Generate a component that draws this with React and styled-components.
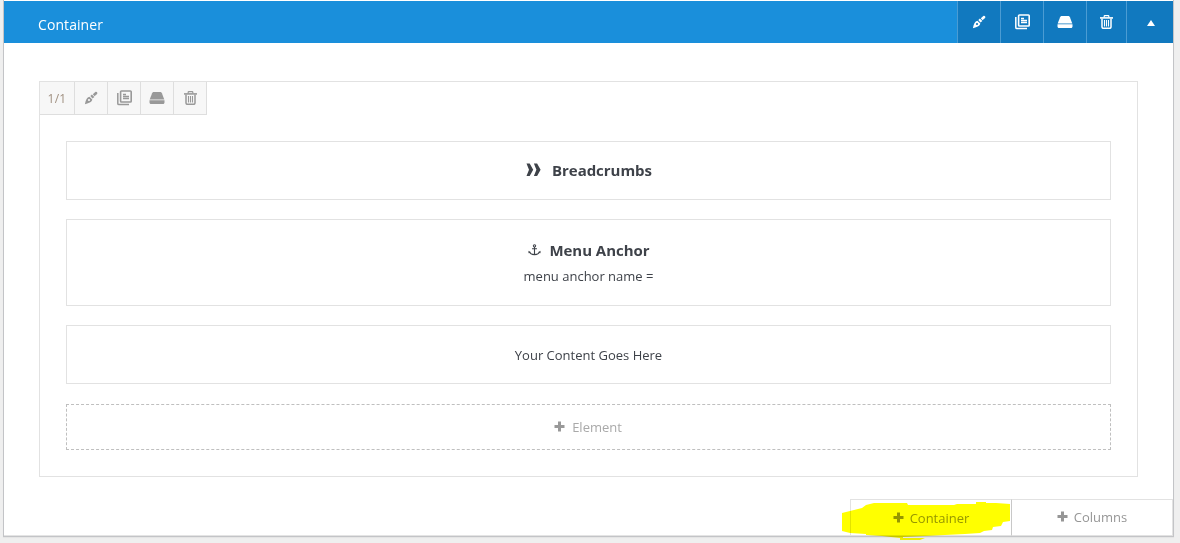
import React from 'react';
import styled, { createGlobalStyle } from 'styled-components';

const GlobalStyle = createGlobalStyle`
  * { box-sizing: border-box; }

  body {
    margin: 0;
    background: #efefef;
    font-family: 'Open Sans', 'Noto Sans', sans-serif;
    color: #3e4249;
  }
`;

const Page = styled.main`
  height: 543px;
  padding: 0 6px 0 3px;
  overflow: hidden;
`;

const Panel = styled.section`
  width: 1171px;
  height: 537px;
  padding-top: 1px;
  display: flex;
  flex-direction: column;
  background: #fff;
  border: 1px solid #c3c4c7;
  border-top: 0;
  box-shadow: inset 0 -1px 0 #e4e4e4, 0 1px 1px rgba(0, 0, 0, 0.04);
`;

const Header = styled.header`
  display: flex;
  height: 42px;
  flex-shrink: 0;
  background: #1a8fdb;
  color: #fff;
`;

const Title = styled.div`
  flex: 1;
  padding-left: 34px;
  font-size: 14px;
  line-height: 47px;
  letter-spacing: 0.08px;
`;

const HeaderButton = styled.button`
  display: flex;
  align-items: center;
  justify-content: center;
  width: ${props => props.$width}px;
  padding: 0;
  border: 0;
  border-left: 1px solid #4b9cd3;
  background: #1179bf;
  color: #fff;
`;

const CollapseButton = styled(HeaderButton)`
  padding: 2px 0 0 2px;
`;

const Column = styled.div`
  width: 1099px;
  height: 396px;
  flex-shrink: 0;
  margin: 38px 0 0 35px;
  border: 1px solid #e2e2e2;
`;

const Toolbar = styled.div`
  display: flex;
  width: 167px;
  height: 33px;
  background: #f7f7f7;
  border-right: 1px solid #dedede;
  border-bottom: 1px solid #dedede;
`;

const Tool = styled.div`
  display: flex;
  align-items: center;
  justify-content: center;
  width: 33px;
  color: #999;

  & + & { border-left: 1px solid #dedede; }
`;

const Size = styled(Tool)`
  width: 34px;
  font-size: 12px;
  letter-spacing: 0.3px;
  color: #a09080;
`;

const Elements = styled.div`
  display: flex;
  flex-direction: column;
  padding: 26px 26px 0;
`;

const Element = styled.div`
  display: flex;
  flex-direction: column;
  align-items: center;
  justify-content: center;
  height: ${props => props.$height}px;
  margin-bottom: ${props => props.$gap || 19}px;
  padding-bottom: ${props => props.$lift || 0}px;
  border: 1px solid #e2e2e2;
`;

const Name = styled.div`
  display: flex;
  align-items: center;
  gap: ${props => props.$gap}px;
  padding-left: 1px;
  font-size: 15px;
  font-weight: 700;
  line-height: 20px;
  letter-spacing: -0.03px;
`;

const Text = styled.div`
  font-size: 13px;
  line-height: 18px;
  margin-top: ${props => props.$top || 0}px;
`;

const AddElement = styled.button`
  display: flex;
  align-items: center;
  justify-content: center;
  gap: 7px;
  height: 46px;
  padding: 0 1px 0 0;
  border: 1px dashed #bfbfbf;
  background: #fff;
  font: 13px 'Open Sans', sans-serif;
  color: #a9a9a9;

  svg {
    color: #999;
    margin-bottom: 1px;
  }
`;

const Footer = styled.footer`
  display: flex;
  justify-content: flex-end;
  height: 37px;
  margin-top: 22px;
`;

const AddButton = styled.button`
  position: relative;
  display: flex;
  align-items: center;
  justify-content: center;
  gap: 6px;
  width: ${props => props.$width}px;
  padding: 0 0 ${props => props.$lift || 0}px 0;
  border: 1px solid #e2e2e2;
  border-left-color: ${props => (props.$divided ? '#c8c8c8' : '#e2e2e2')};
  border-right-width: ${props => (props.$divided ? 1 : 0)}px;
  background: #fff;
  font: 13px 'Open Sans', sans-serif;
  color: #969696;
`;

const Marker = styled.svg`
  position: absolute;
  left: -9px;
  top: 2px;
  overflow: visible;
  mix-blend-mode: multiply;
`;

const PenIcon = () => (
  <svg width="14" height="14" viewBox="0 0 14 14" fill="none">
    <path d="M8.800 3.200 11.300 1c1.300-.8 2.700.8 1.800 2L10.500 5.300Z" fill="currentColor" />
    <path d="m7.900 3.500 2.500 2.600-1.900 1.500L6.300 5.100Z" fill="currentColor" />
    <path
      fillRule="evenodd"
      d="M5.400 5.800 8.300 8.500C8 10.900 5.600 12 .9 13.300 1.700 8.900 3 6.400 5.400 5.800ZM5 7.900a1.100 1.100 0 1 0 0 2.200 1.100 1.100 0 0 0 0-2.200Z"
      fill="currentColor"
    />
  </svg>
);

const CloneIcon = () => (
  <svg width="16" height="16" viewBox="0 0 16 16" fill="none" stroke="currentColor">
    <rect x="4.600" y="1" width="10.600" height="11" rx=".8" strokeWidth="1.600" />
    <path d="M1.800 3v10.400c0 .8.400 1.200 1.200 1.200h10" strokeWidth="1.500" />
    <path d="M7 4.500h3M7 6.500h6M7 8.500h6" strokeWidth="1.300" />
  </svg>
);

const DriveIcon = () => (
  <svg width="16" height="14" viewBox="0 0 16 14" fill="currentColor">
    <path d="M5 1h6c1 0 1.500.4 1.900 1.200L15.300 8.500H.7l2.400-6.300C3.500 1.400 4 1 5 1Z" />
    <path d="M.5 9.300h15v2.200c0 .9-.6 1.500-1.500 1.500H2c-.9 0-1.500-.6-1.500-1.500Z" />
  </svg>
);

const TrashIcon = () => (
  <svg width="13" height="14" viewBox="0 0 13 14" fill="none" stroke="currentColor">
    <path d="M4.200 2.500V1.300c0-.4.200-.7.600-.7h3.400c.4 0 .6.300.6.700v1.200" strokeWidth="1.200" />
    <path d="M0 2.900h13" strokeWidth="1.600" />
    <path d="M2 3.500v8.600c0 .8.400 1.200 1.200 1.200h6.600c.8 0 1.200-.4 1.200-1.200V3.500" strokeWidth="1.500" />
    <path d="M4.500 5v6.500M6.500 5v6.500M8.500 5v6.500" strokeWidth="1.100" />
  </svg>
);

const CollapseIcon = () => (
  <svg width="8" height="6" viewBox="0 0 8 6" fill="currentColor">
    <path d="M4 0 8 6H0Z" />
  </svg>
);

const ChevronsIcon = () => (
  <svg width="15" height="14" viewBox="0 0 15 14" fill="currentColor">
    <path d="M.5.600h3.200L7.200 6.700 3.700 13H.5L3 6.700Z" />
    <path d="M7.900.600h3.200l3.500 6.100L11.100 13H7.900l2.500-6.300Z" />
  </svg>
);

const AnchorIcon = () => (
  <svg width="13" height="12" viewBox="0 0 14 13" fill="none" stroke="currentColor">
    <circle cx="7" cy="2" r="1.300" strokeWidth="1.100" />
    <path d="M7 3.300v8M4.300 5.200h5.400" strokeWidth="1.200" />
    <path d="M1.600 8.500c.6 2 2.500 2.900 5.400 2.900s4.800-.9 5.400-2.900" strokeWidth="1.400" />
    <path d="M.5 10V7.300l2.600 1.600ZM13.500 10V7.300l-2.600 1.600Z" fill="currentColor" stroke="none" />
  </svg>
);

const PlusIcon = () => (
  <svg width="11" height="11" viewBox="0 0 11 11" fill="currentColor">
    <path d="M4 .5h3V4h3.500v3H7v3.500H4V7H.5V4H4Z" />
  </svg>
);

const actions = [
  { name: 'edit', Icon: PenIcon, width: 43 },
  { name: 'clone', Icon: CloneIcon, width: 43 },
  { name: 'save', Icon: DriveIcon, width: 43 },
  { name: 'delete', Icon: TrashIcon, width: 40 },
];

const App = () => (
  <Page>
    <GlobalStyle />
    <Panel>
      <Header>
        <Title>Container</Title>
        {actions.map(({ name, Icon, width }) => (
          <HeaderButton key={name} $width={width} aria-label={name}>
            <Icon />
          </HeaderButton>
        ))}
        <CollapseButton $width={47} aria-label="collapse">
          <CollapseIcon />
        </CollapseButton>
      </Header>

      <Column>
        <Toolbar>
          <Size>1/1</Size>
          {actions.map(({ name, Icon }) => (
            <Tool key={name}>
              <Icon />
            </Tool>
          ))}
        </Toolbar>

        <Elements>
          <Element $height={59} $lift={2}>
            <Name $gap={11}>
              <ChevronsIcon />
              Breadcrumbs
            </Name>
          </Element>
          <Element $height={87} $lift={1}>
            <Name $gap={8}>
              <AnchorIcon />
              Menu Anchor
            </Name>
            <Text $top={7}>menu anchor name =</Text>
          </Element>
          <Element $height={59} $gap={20}>
            <Text>Your Content Goes Here</Text>
          </Element>
          <AddElement>
            <PlusIcon />
            Element
          </AddElement>
        </Elements>
      </Column>

      <Footer>
        <AddButton $width={161}>
          <PlusIcon />
          Container
          <Marker width="169" height="38" viewBox="0 0 169 38">
            <path
              d="M0 11 8 9l12-3 4-3 8-2h33l1 2h46l3-1h19V0h10v1h10l14 1v17l-7 1-2 4-8 1-1 3-8 1-4 2-15 1-20 1-20 1-22 1v1H83l-5 2H58v-2l-18-2-16-1v-1l-16-1-8-2Z"
              fill="#ff0"
            />
          </Marker>
        </AddButton>
        <AddButton $width={162} $divided $lift={2}>
          <PlusIcon />
          Columns
        </AddButton>
      </Footer>
    </Panel>
  </Page>
);

export default App;
